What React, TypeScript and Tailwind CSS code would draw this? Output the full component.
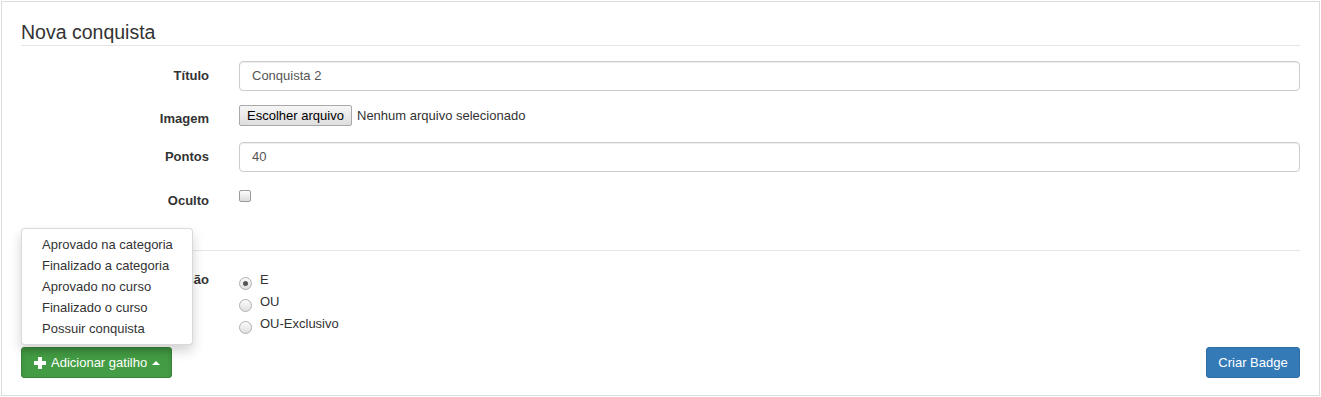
import { useState } from "react";

const gatilhos = [
  "Aprovado na categoria",
  "Finalizado a categoria",
  "Aprovado no curso",
  "Finalizado o curso",
  "Possuir conquista",
];

const operacoes = ["E", "OU", "OU-Exclusivo"];

function Label({ children }: { children: React.ReactNode }) {
  return (
    <label className="w-[188px] shrink-0 text-right font-bold text-[#333]">{children}</label>
  );
}

function PlusIcon() {
  return (
    <svg width="12" height="12" viewBox="0 0 12 12" className="shrink-0">
      <rect x="4" y="0" width="4" height="12" fill="#fff" />
      <rect x="0" y="4" width="12" height="4" fill="#fff" />
    </svg>
  );
}

export default function App() {
  const [operacao, setOperacao] = useState("E");

  return (
    <div className="p-[1px] font-['Liberation_Sans',Arial,sans-serif] text-[13px] text-[#333] bg-white">
      <div className="h-[395px] border border-[#dcdcdc] bg-white px-[19px] flex flex-col">
        {/* Legend */}
        <div className="mt-[16px] h-[28px] leading-[29px] border-b border-[#e5e5e5] text-[19.5px] text-[#333]">
          Nova conquista
        </div>

        {/* Título */}
        <div className="mt-[15px] h-[30px] flex items-center gap-[30px]">
          <Label>Título</Label>
          <div className="flex-1 h-[30px] border border-[#ccc] rounded-[4px] px-[12px] flex items-center text-[#555] shadow-[inset_0_1px_1px_rgba(0,0,0,0.075)]">
            Conquista 2
          </div>
        </div>

        {/* Imagem */}
        <div className="mt-[14px] h-[28px] flex items-start gap-[30px]">
          <label className="w-[188px] shrink-0 text-right font-bold text-[#333] leading-[28px]">Imagem</label>
          <div className="flex items-center">
            <span className="h-[21px] w-[113px] flex items-center justify-center border border-[#a9a9a9] rounded-[2px] bg-gradient-to-b from-[#f6f6f6] to-[#dedede] text-black">
              Escolher arquivo
            </span>
            <span className="ml-[5px] text-[#333]">Nenhum arquivo selecionado</span>
          </div>
        </div>

        {/* Pontos */}
        <div className="mt-[9px] h-[30px] flex items-center gap-[30px]">
          <Label>Pontos</Label>
          <div className="flex-1 h-[30px] border border-[#ccc] rounded-[4px] px-[12px] flex items-center text-[#555] shadow-[inset_0_1px_1px_rgba(0,0,0,0.075)]">
            40
          </div>
        </div>

        {/* Oculto */}
        <div className="mt-[16px] h-[25px] flex items-start gap-[30px]">
          <label className="w-[188px] shrink-0 text-right font-bold text-[#333] leading-[25px]">Oculto</label>
          <span className="mt-[2px] w-[12px] h-[12px] border border-[#9a9a9a] rounded-[2px] bg-gradient-to-b from-[#fcfcfc] to-[#dcdcdc]" />
        </div>

        <div className="mt-[37px] border-t border-[#e5e5e5]" />

        {/* Operação */}
        <div className="mt-[18px] flex items-start gap-[30px]">
          <label className="w-[188px] shrink-0 text-right font-bold text-[#333] leading-[22px]">Operação</label>
          <div className="flex flex-col">
            {operacoes.map((op) => (
              <div
                key={op}
                className="h-[22px] flex items-start gap-[8px] cursor-pointer"
                onClick={() => setOperacao(op)}
              >
                <span className="mt-[8px] w-[13px] h-[13px] rounded-full border border-[#b0b0b0] bg-gradient-to-b from-[#fbfbfb] to-[#e0e0e0] flex items-center justify-center">
                  {operacao === op && <span className="w-[5px] h-[5px] rounded-full bg-[#555]" />}
                </span>
                <span className="leading-[22px] text-[#333]">{op}</span>
              </div>
            ))}
          </div>
        </div>

        {/* Botões */}
        <div className="mt-[12px] flex justify-between items-start">
          <div className="relative">
            <div className="absolute left-0 bottom-[calc(100%+2px)] z-10 w-[172px] py-[5px] bg-white border border-[rgba(0,0,0,0.15)] rounded-[4px] shadow-[0_6px_12px_rgba(0,0,0,0.175)]">
              {gatilhos.map((g) => (
                <div key={g} className="h-[21px] leading-[21px] px-[20px] whitespace-nowrap text-[#333]">
                  {g}
                </div>
              ))}
            </div>
            <button className="h-[31px] w-[151px] flex items-center pl-[12px] pr-[10px] bg-[#449d44] border border-[#398439] rounded-[3px] text-white shadow-[inset_0_3px_5px_rgba(0,0,0,0.125)]">
              <PlusIcon />
              <span className="ml-[5px]">Adicionar gatilho</span>
              <span className="ml-[5px] w-0 h-0 border-l-[4px] border-r-[4px] border-b-[4px] border-l-transparent border-r-transparent border-b-white" />
            </button>
          </div>
          <button className="h-[31px] w-[94px] flex items-center justify-center bg-[#337ab7] border border-[#2e6da4] rounded-[3px] text-white">
            Criar Badge
          </button>
        </div>
      </div>
    </div>
  );
}
